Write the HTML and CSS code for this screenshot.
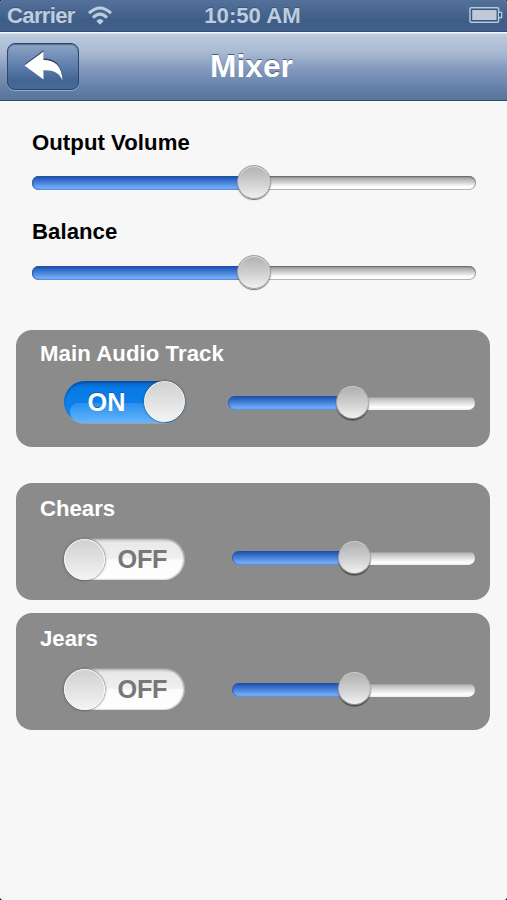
FILE: index.html
```html
<!DOCTYPE html>
<html lang="en">
<head>
<meta charset="utf-8">
<title>Mixer</title>
<link rel="stylesheet" href="styles.css">
</head>
<body>
<div class="screen">
  <header class="status">
    <div class="status-left">
      <span class="carrier">Carrier</span>
      <svg class="wifi" width="26" height="20" viewBox="0 0 26 20" fill="none" stroke="#becddd">
        <path d="M2 7.2Q13-3.2 24 7.2" stroke-width="3"/>
        <path d="M6 11.6Q13 4.8 20 11.6" stroke-width="3"/>
        <path d="M9.4 15Q13 11 16.6 15L13 18.8Z" fill="#becddd" stroke="none"/>
      </svg>
    </div>
    <span class="time">10:50 AM</span>
    <svg class="battery" width="34" height="18" viewBox="0 0 34 18">
      <rect x="1" y="1.7" width="28.6" height="14.6" rx="1.2" fill="#34547d" stroke="#b3cce2" stroke-width="1.5"/>
      <rect x="3.2" y="4" width="24.4" height="10" fill="#c1c9d8"/>
      <path d="M30 6.3h2.6v5.2H30" fill="#34547d" stroke="#b3cce2" stroke-width="1.3"/>
    </svg>
  </header>
  <nav class="navbar">
    <button class="back" aria-label="Back">
      <svg width="42" height="32" viewBox="0 0 42 32">
        <path d="M2.5 15.5L21.5 1V9.5C33 9.5 40.5 16 40.5 30.5C37.5 22.5 31 19.7 21.5 20.2V29Z" fill="#2e4566" transform="translate(0 -1)"/>
        <path d="M2.5 15.5L21.5 1.5V10C33 10 40 16 40.5 30.5C37.5 22.5 31 19.7 21.5 20.2V29.5Z" fill="#fff"/>
      </svg>
    </button>
    <h1 class="title">Mixer</h1>
  </nav>
  <main class="content">
    <section class="control">
      <h2 class="label">Output Volume</h2>
      <div class="slider"><div class="fill"></div><div class="thumb"></div></div>
    </section>
    <section class="control control-balance">
      <h2 class="label">Balance</h2>
      <div class="slider"><div class="fill"></div><div class="thumb"></div></div>
    </section>
    <section class="panel panel-main">
      <h2 class="label">Main Audio Track</h2>
      <div class="row">
        <div class="switch on"><span class="state">ON</span><div class="knob"></div></div>
        <div class="slider"><div class="fill"></div><div class="thumb"></div></div>
      </div>
    </section>
    <section class="panel">
      <h2 class="label">Chears</h2>
      <div class="row">
        <div class="switch off"><div class="knob"></div><span class="state">OFF</span></div>
        <div class="slider"><div class="fill"></div><div class="thumb"></div></div>
      </div>
    </section>
    <section class="panel panel-last">
      <h2 class="label">Jears</h2>
      <div class="row">
        <div class="switch off"><div class="knob"></div><span class="state">OFF</span></div>
        <div class="slider"><div class="fill"></div><div class="thumb"></div></div>
      </div>
    </section>
  </main>
</div>
</body>
</html>
```
FILE: styles.css
```css
* { box-sizing: border-box; margin: 0; padding: 0; }

body {
  background: #000;
  font-family: "Liberation Sans", Arial, sans-serif;
  font-weight: bold;
}

.screen {
  width: 507px;
  height: 900px;
  background: #f7f7f7;
  border-radius: 3px;
  overflow: hidden;
}

.status {
  display: grid;
  grid-template-columns: 1fr auto 1fr;
  height: 31px;
  padding: 0 4px 0 2px;
  line-height: 31px;
  font-size: 22.17px;
  color: #becddd;
  background: linear-gradient(#54719a, #3f5e87 65%, #426089);
  text-shadow: 0 -1px 0 #38547a;
}

.status-left { display: flex; align-items: center; gap: 12.5px; padding-left: 5px; }
.carrier { letter-spacing: -0.7px; }
.wifi { margin-top: 1px; }
.time { letter-spacing: 0; }
.battery { justify-self: end; align-self: center; margin-top: -1px; }

.navbar {
  display: grid;
  grid-template-columns: 72px 1fr 72px;
  align-items: center;
  height: 70px;
  padding: 0 11px 0 7px;
  border-top: 1px solid #2f4c74;
  border-bottom: 1px solid #2d4a70;
  background: linear-gradient(#f3f8fc 0 1px, #bccbde 2px, #a8b9d1 30%, #8299bd 55%, #5d7aa2 90%, #587598);
}

.back {
  display: flex;
  align-items: center;
  justify-content: center;
  height: 47px;
  border: 1.5px solid #2f4669;
  border-radius: 8px;
  background: linear-gradient(#8da5c6, #5d7dab 50%, #426694 80%, #48699a);
  box-shadow: 0 1px 0 #93abc9, inset 0 1px 1px #526e96;
}

.title {
  height: 68px;
  line-height: 69px;
  font-size: 31.7px;
  text-align: center;
  color: #fff;
  text-shadow: 0 -1.5px 0 #4b5f7d;
}

.content {
  display: flex;
  flex-direction: column;
  padding: 29px 17.5px 0 16px;
}

.label { height: 26px; line-height: 26px; font-size: 22.17px; color: #000; white-space: nowrap; }

.control {
  display: flex;
  flex-direction: column;
  gap: 20px;
  width: 459.5px;
  height: 89px;
  padding-left: 16px;
}
.control .label { letter-spacing: 0.05px; }
.control-balance { gap: 21px; height: 110.5px; }

.slider {
  position: relative;
  height: 14px;
  border-radius: 7px;
  background: linear-gradient(#858585 0, #b0b0b0 20%, #d0d0d0 45%, #fff 75%, #fff);
  box-shadow: inset 0 0 0 1px rgba(105, 105, 105, .5), inset 0 1px 1px rgba(70, 70, 70, .4);
}

.fill {
  width: 50%;
  height: 14px;
  border-radius: 7px 0 0 7px;
  background: linear-gradient(#1b4ca0, #3068c5 25%, #508add 55%, #74acf8 85%, #5a91df);
  box-shadow: inset 1px 0 1px #285ab0;
}

.thumb {
  position: absolute;
  left: 50%;
  top: -11px;
  width: 34px;
  height: 34px;
  margin-left: -16.5px;
  border-radius: 50%;
  background: linear-gradient(#b0b0b0, #cbcbcb 45%, #f0f0f0);
  border: 1px solid #a0a0a0;
  box-shadow: 0 1px 1px rgba(60, 60, 60, .7), inset 0 1px 1px #e0e0e0;
}

.panel {
  height: 117px;
  margin-bottom: 13px;
  padding: 12.5px 14.5px 0 24px;
  border-radius: 16px;
  background: #8b8b8b;
}
.panel .label { color: #fff; }
.panel-main { margin-bottom: 36.5px; padding-top: 11px; }
.panel-main .label { letter-spacing: 0.08px; }

.row { display: flex; align-items: flex-start; gap: 47px; padding: 16.5px 0 0 24px; }
.panel-main .row { gap: 43.5px; padding-top: 14px; }

.panel .slider {
  flex: 1;
  margin-top: 13px;
  background: linear-gradient(#8b8b8b 0 1px, #b8b8b8 2px, #d9d9d9 45%, #fff 80%, #eee);
  box-shadow: none;
}
.panel-main .slider { margin-top: 15.5px; }
.panel-last .slider { margin-top: 14.5px; }
.panel .thumb { top: -10.5px; height: 33px; width: 33px; margin-left: -15.5px; border-color: #cbcbcb #aaa #8e8e8e; box-shadow: 0 1.5px 1px rgba(50, 50, 50, .75); }

.switch {
  display: flex;
  align-items: center;
  width: 120.5px;
  height: 42px;
  border-radius: 21px;
  line-height: 42px;
  font-size: 25.3px;
}
.on {
  position: relative;
  justify-content: flex-end;
  color: #fff;
  background: linear-gradient(#0565c8, #0879e4 18%, #0b80ea 60%, #1485ed);
  box-shadow: inset 0 2px 2px rgba(0, 65, 140, .6), 0 1px 0 #a0a0a0;
}
.on::before {
  content: "";
  position: absolute;
  left: 6px;
  right: 20px;
  bottom: 0;
  height: 20px;
  border-radius: 10px 0 0 14px;
  background: linear-gradient(#2790ef, #68b4fb);
}
.on .state { position: relative; margin-right: 18px; text-shadow: 0 -1px 0 #0a5fb4; }
.on .knob { position: relative; }
.off {
  color: #777;
  background: linear-gradient(#c4c4c4, #e9e9e9 12%, #efefef 48%, #fbfbfb 52%, #fff);
  box-shadow: inset -1px 0 2px #999, inset 0 1px 2px #8d8d8d;
}
.off .state { margin-left: 12.5px; letter-spacing: -0.3px; }

.knob {
  flex: none;
  width: 41px;
  height: 41px;
  border-radius: 50%;
  border: 1.5px solid #f9f9f9;
  background: linear-gradient(#d0d0d0, #e0e0e0 45%, #f3f3f3);
  box-shadow: 0 0 2px .5px rgba(70, 70, 70, .75);
}
```
